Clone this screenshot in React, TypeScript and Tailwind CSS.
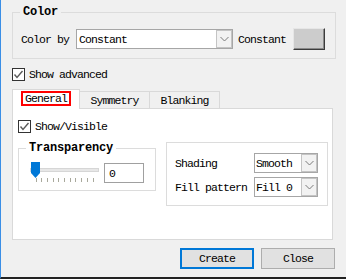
import React from "react";

const T = "font-['Liberation_Mono',monospace] text-[11.5px] tracking-[-0.9px] text-black leading-[13px] whitespace-nowrap";
const TB = "font-['Liberation_Mono',monospace] text-[12px] font-bold tracking-[-0.2px] text-black leading-[14px] whitespace-nowrap";
const TTAB = "font-['Liberation_Mono',monospace] text-[11.5px] tracking-[-0.9px] text-black leading-[11px] whitespace-nowrap";

function CheckBox() {
  return (
    <span className="w-[13px] h-[13px] border border-[#333333] bg-white flex items-center justify-center shrink-0">
      <svg width="11" height="11" viewBox="0 0 11 11">
        <path d="M1.5 5.5 L4 8.5 L9.5 2" stroke="#5a5a5a" strokeWidth="1.4" fill="none" />
      </svg>
    </span>
  );
}

function Select({ value, w, pl }: { value: string; w: string; pl: string }) {
  return (
    <div className={`flex h-[20px] border border-[#a6a6a6] bg-white ${w}`}>
      <div className={`flex-1 flex items-center ${pl} ${T}`}>{value}</div>
      <div className="w-[16px] h-full border border-[#c4c4c4] bg-[#f2f2f2] flex items-center justify-center">
        <svg width="9" height="6" viewBox="0 0 9 6">
          <path d="M0.5 1 L4.5 5 L8.5 1" stroke="#7a7a7a" strokeWidth="1" fill="none" />
        </svg>
      </div>
    </div>
  );
}

function Slider() {
  const ticks = Array.from({ length: 11 }, (_, i) => 5.5 + i * 5.7);
  return (
    <svg width="69" height="21" viewBox="0 0 69 21" className="shrink-0">
      <rect x="0.5" y="6.5" width="68" height="3" fill="#e7e7e7" stroke="#d6d6d6" />
      {ticks.map((x, i) => (
        <line key={i} x1={Math.round(x) + 0.5} y1="16" x2={Math.round(x) + 0.5} y2="20" stroke="#a9a99c" strokeWidth="1" />
      ))}
      <path d="M1 0 H10 V11 L5.5 16 L1 11 Z" fill="#0078d7" />
    </svg>
  );
}

export default function App() {
  return (
    <div className="w-[346px] h-[279px] bg-[#f0f0f0] border-l border-l-[#3a8ee6] border-b-2 border-b-[#222222] flex flex-col pl-[11px]">
      {/* Color group */}
      <fieldset className="mt-[5px] w-[324px] border border-[#dcdcdc] pl-[8px] pt-[9px] pb-[8px]">
        <legend className={`px-[3px] ml-[-1px] ${TB}`}>Color</legend>
        <div className="flex items-center h-[22px]">
          <span className={T}>Color by</span>
          <div className="ml-[7px]">
            <Select value="Constant" w="w-[157px]" pl="pl-[2px]" />
          </div>
          <span className={`ml-[5px] ${T}`}>Constant</span>
          <div className="ml-[7px] w-[32px] h-[22px] bg-[#cccccc] border border-t-[#e6e6e6] border-l-[#e6e6e6] border-r-[#3c3c3c] border-b-[#3c3c3c] shadow-[inset_-1px_-1px_0_#8a8a8a]" />
        </div>
      </fieldset>

      {/* Show advanced */}
      <div className="mt-[9px] flex items-center gap-[4px]">
        <CheckBox />
        <span className={T}>Show advanced</span>
      </div>

      {/* Tabs */}
      <div className="mt-[8px] flex items-end h-[19px]">
        <div className="relative z-10 w-[68px] h-[20px] mb-[-1px] bg-white border border-b-0 border-[#d9d9d9] flex justify-center pt-[1px]">
          <span className={`border-2 border-[#ff0000] px-[2px] h-[15px] ${TTAB}`}>General</span>
        </div>
        <div className="ml-[-1px] w-[71px] h-[17px] border border-b-0 border-[#d9d9d9] bg-[#f0f0f0] flex items-center justify-center">
          <span className={T}>Symmetry</span>
        </div>
        <div className="ml-[-1px] w-[71px] h-[17px] border border-b-0 border-[#d9d9d9] bg-[#f0f0f0] flex items-center justify-center">
          <span className={T}>Blanking</span>
        </div>
      </div>

      {/* Panel */}
      <div className="w-[321px] h-[132px] bg-white border border-[#d9d9d9] pl-[5px] pt-[11px] flex flex-col">
        <div className="flex items-center gap-[4px]">
          <CheckBox />
          <span className={T}>Show/Visible</span>
        </div>
        <div className="mt-[8px] flex items-start gap-[10px]">
          <fieldset className="w-[138px] border border-[#dcdcdc] pl-[7px] pt-[7px] pb-[7px]">
            <legend className={`px-[3px] ${TB}`}>Transparency</legend>
            <div className="flex items-start">
              <div className="ml-[4px]">
                <Slider />
              </div>
              <div className={`ml-[5px] mt-[1px] w-[40px] h-[20px] border border-[#a0a0a0] bg-white flex items-center pl-[4px] ${T}`}>0</div>
            </div>
          </fieldset>
          <div className="mt-[1px] w-[162px] border border-[#dcdcdc] pt-[10px] pb-[8px] pl-[8px] flex flex-col gap-[4px]">
            <div className="flex items-center">
              <span className={`w-[79px] ${T}`}>Shading</span>
              <Select value="Smooth" w="w-[64px]" pl="pl-[1px]" />
            </div>
            <div className="flex items-center">
              <span className={`w-[79px] ${T}`}>Fill pattern</span>
              <Select value="Fill 0" w="w-[64px]" pl="pl-[1px]" />
            </div>
          </div>
        </div>
      </div>

      {/* Buttons */}
      <div className="mt-[8px] w-[323px] flex justify-end gap-[7px]">
        <button className={`w-[74px] h-[21px] border-2 border-[#0078d7] bg-[#e1e1e1] flex items-center justify-center ${T}`}>Create</button>
        <button className={`w-[74px] h-[21px] border border-[#adadad] bg-[#e1e1e1] flex items-center justify-center ${T}`}>Close</button>
      </div>
    </div>
  );
}
